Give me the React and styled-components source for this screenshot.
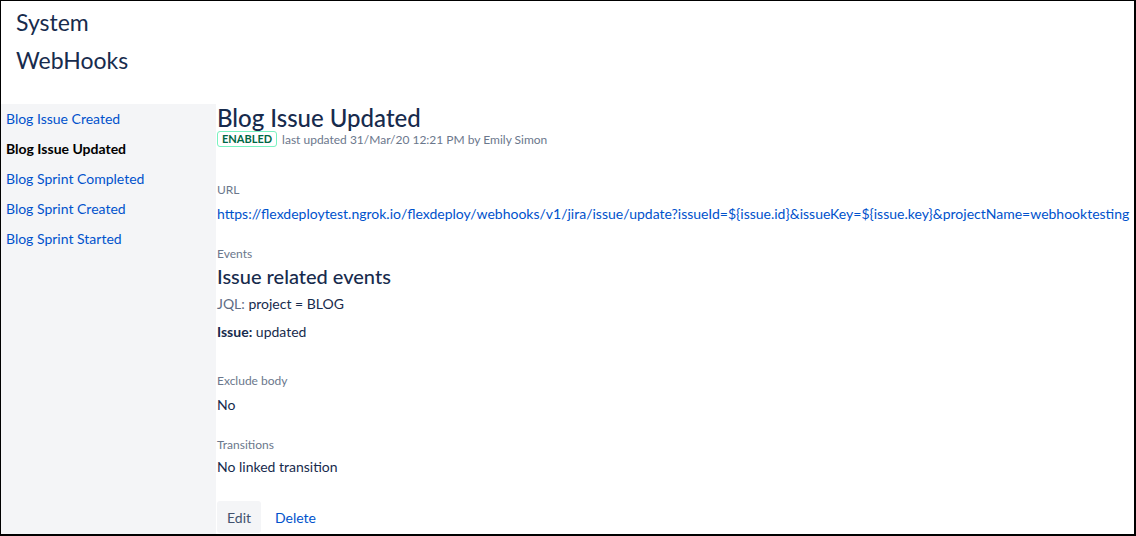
import React from 'react';
import styled, { createGlobalStyle } from 'styled-components';

const GlobalStyle = createGlobalStyle`
  html, body {
    margin: 0;
    padding: 0;
    background: #fff;
  }
  body {
    font-family: Lato, "Noto Sans", sans-serif;
    color: #172b4d;
  }
`;

const Frame = styled.div`
  box-sizing: border-box;
  width: 1136px;
  height: 536px;
  border: 1px solid #000;
  border-right-width: 2px;
  border-bottom-width: 2px;
  overflow: hidden;
  display: flex;
  flex-direction: column;
`;

const PageHeader = styled.h1`
  margin: 0;
  padding: 2px 0 0 15px;
  height: 103px;
  flex-shrink: 0;
  box-sizing: border-box;
  font-size: 23px;
  font-weight: 400;
  line-height: 38px;
  color: #172b4d;
`;

const Body = styled.div`
  flex: 1;
  display: flex;
  min-height: 0;
`;

const Sidebar = styled.nav`
  width: 215px;
  flex-shrink: 0;
  background: #f4f5f7;
  display: flex;
  flex-direction: column;
`;

const NavItem = styled.a`
  display: block;
  padding: 0 5px;
  height: 30px;
  line-height: 30px;
  font-size: 14px;
  text-decoration: none;
  white-space: nowrap;
  color: ${p => (p.$active ? '#000' : '#0052cc')};
  font-weight: ${p => (p.$active ? 700 : 400)};
`;

const Content = styled.main`
  flex: 1;
  min-width: 0;
  display: flex;
  flex-direction: column;
  padding: 1px 0 0 1px;
  white-space: nowrap;
`;

const Title = styled.h2`
  margin: 0;
  font-size: 24px;
  font-weight: 500;
  line-height: 26px;
  color: #172b4d;
`;

const Meta = styled.div`
  display: flex;
  align-items: center;
  gap: 5px;
  font-size: 12px;
  color: #6b778c;
  height: 16px;
`;

const Lozenge = styled.span`
  box-sizing: border-box;
  border: 1px solid #79f2c0;
  border-radius: 3px;
  padding: 0 4px;
  height: 16px;
  line-height: 14px;
  font-size: 11px;
  font-weight: 700;
  color: #006644;
  text-transform: uppercase;
`;

const Field = styled.section`
  margin-top: ${p => p.$gap || 0}px;
`;

const Label = styled.div`
  font-size: 12px;
  line-height: 16px;
  color: #6b778c;
`;

const Value = styled.div`
  font-size: 14px;
  line-height: 20px;
  color: #172b4d;
  margin-top: ${p => p.$gap || 0}px;
`;

const Link = styled.a`
  font-size: 14px;
  line-height: 20px;
  color: #0052cc;
  text-decoration: none;
`;

const SubHeading = styled.h3`
  margin: 1px 0 0;
  font-size: 20px;
  font-weight: 500;
  line-height: 26px;
  color: #172b4d;
`;

const Muted = styled.span`
  color: #5e6c84;
`;

const Actions = styled.div`
  display: flex;
  margin-top: 24px;
`;

const Button = styled.button`
  border: none;
  border-radius: 3px;
  font-family: inherit;
  font-size: 14px;
  height: 32px;
  padding: 0 10px;
  cursor: pointer;
  background: ${p => (p.$link ? 'transparent' : '#f4f5f7')};
  color: ${p => (p.$link ? '#0052cc' : '#42526e')};
  margin-left: ${p => (p.$link ? 4 : 0)}px;
`;

const hooks = [
  'Blog Issue Created',
  'Blog Issue Updated',
  'Blog Sprint Completed',
  'Blog Sprint Created',
  'Blog Sprint Started',
];

export default function App() {
  const url =
    'https://flexdeploytest.ngrok.io/flexdeploy/webhooks/v1/jira/issue/update?issueId=${issue.id}&issueKey=${issue.key}&projectName=webhooktesting';

  return (
    <>
      <GlobalStyle />
      <Frame>
        <PageHeader>
          System
          <br />
          WebHooks
        </PageHeader>
        <Body>
          <Sidebar>
            {hooks.map(name => (
              <NavItem key={name} href="#" $active={name === 'Blog Issue Updated'}>
                {name}
              </NavItem>
            ))}
          </Sidebar>
          <Content>
            <Title>Blog Issue Updated</Title>
            <Meta>
              <Lozenge>Enabled</Lozenge>
              last updated 31/Mar/20 12:21 PM by Emily Simon
            </Meta>

            <Field $gap={35}>
              <Label>URL</Label>
              <Value $gap={6}>
                <Link href="#">{url}</Link>
              </Value>
            </Field>

            <Field $gap={22}>
              <Label>Events</Label>
              <SubHeading>Issue related events</SubHeading>
              <Value $gap={5}>
                <Muted>JQL:</Muted> project = BLOG
              </Value>
              <Value $gap={8}>
                <strong>Issue:</strong> updated
              </Value>
            </Field>

            <Field $gap={31}>
              <Label>Exclude body</Label>
              <Value $gap={6}>No</Value>
            </Field>

            <Field $gap={22}>
              <Label>Transitions</Label>
              <Value $gap={4}>No linked transition</Value>
            </Field>

            <Actions>
              <Button>Edit</Button>
              <Button $link>Delete</Button>
            </Actions>
          </Content>
        </Body>
      </Frame>
    </>
  );
}
